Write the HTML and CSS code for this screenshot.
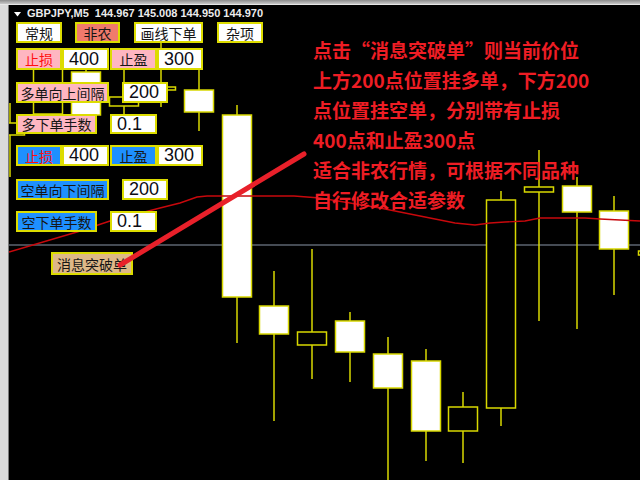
FILE: index.html
```html
<!DOCTYPE html>
<html lang="zh-CN">
<head>
    <meta charset="UTF-8">
    <title>GBPJPY,M5</title>
    <link rel="stylesheet" href="styles.css">
</head>
<body>
    <div class="window">
        <div class="topbar"></div>
        <div class="main">
            <div class="side"></div>
            <div class="chart">
                <svg class="plot" width="631" height="475" viewBox="9 5 631 475">
                    <line class="grid" x1="9" y1="245" x2="640" y2="245"/>

                    <line class="wick" x1="10" y1="103" x2="10" y2="177"/>
                    <rect class="down" x="-4.5" y="123" width="29" height="12"/>
                    <line class="wick" x1="48" y1="50" x2="48" y2="116"/>
                    <rect class="down" x="33.5" y="58" width="29" height="56"/>
                    <line class="wick" x1="86" y1="60" x2="86" y2="125"/>
                    <rect class="up" x="71.5" y="72" width="29" height="43"/>
                    <line class="wick" x1="124" y1="70" x2="124" y2="114"/>
                    <rect class="down" x="109.5" y="97" width="29" height="9"/>
                    <line class="wick" x1="161" y1="35" x2="161" y2="107"/>
                    <rect class="down" x="146.5" y="87" width="29" height="3"/>
                    <line class="wick" x1="199" y1="70" x2="199" y2="131"/>
                    <rect class="up" x="184.5" y="90" width="29" height="22"/>
                    <line class="wick" x1="237" y1="105" x2="237" y2="343"/>
                    <rect class="up" x="222.5" y="115" width="29" height="182"/>
                    <line class="wick" x1="274" y1="271" x2="274" y2="421"/>
                    <rect class="up" x="259.5" y="306" width="29" height="28"/>
                    <line class="wick" x1="312" y1="249" x2="312" y2="379"/>
                    <rect class="down" x="297.5" y="332" width="29" height="13"/>
                    <line class="wick" x1="350" y1="312" x2="350" y2="382"/>
                    <rect class="up" x="335.5" y="321" width="29" height="31"/>
                    <line class="wick" x1="388" y1="337" x2="388" y2="480"/>
                    <rect class="up" x="373.5" y="354" width="29" height="34"/>
                    <line class="wick" x1="426" y1="349" x2="426" y2="461"/>
                    <rect class="up" x="411.5" y="361" width="29" height="70"/>
                    <line class="wick" x1="463" y1="392" x2="463" y2="463"/>
                    <rect class="down" x="448.5" y="407" width="29" height="24"/>
                    <line class="wick" x1="501" y1="191" x2="501" y2="426"/>
                    <rect class="down" x="486.5" y="200" width="29" height="208"/>
                    <line class="wick" x1="539" y1="150" x2="539" y2="321"/>
                    <rect class="down" x="524.5" y="187" width="29" height="5"/>
                    <line class="wick" x1="577" y1="177" x2="577" y2="329"/>
                    <rect class="up" x="562.5" y="186" width="29" height="26"/>
                    <line class="wick" x1="614" y1="196" x2="614" y2="295"/>
                    <rect class="up" x="599.5" y="211" width="29" height="38"/>
                    <rect class="down" x="638.5" y="251" width="29" height="4"/>

                    <polyline class="ma" points="9,252 77,232 110,221 160,208 180,203 197,197 207,196 294,196 320,198 350,203 380,208 420,216 455,223 475,225 490,223 505,222 525,221 540,218 585,218 600,219 620,220 640,221"/>
                </svg>

                <div class="title">
                    <svg class="caret" width="7" height="5" viewBox="0 0 7 5"><path d="M0 0H7L3.5 4.5Z"/></svg>
                    <span>GBPJPY,M5&nbsp; 144.967 145.008 144.950 144.970</span>
                </div>

                <div class="panel">
                    <div class="row tabs">
                        <div class="box white w46">常规</div>
                        <div class="box salmon w45">非农</div>
                        <div class="box white w69">画线下单</div>
                        <div class="box white w46">杂项</div>
                    </div>
                    <div class="row pair r2">
                        <div class="box pink w46 alert">止损</div>
                        <div class="box field w47">400</div>
                        <div class="box pink w47 gap1">止盈</div>
                        <div class="box field w46">300</div>
                    </div>
                    <div class="row spaced r3">
                        <div class="box pink w93">多单向上间隔</div>
                        <div class="box field w46">200</div>
                    </div>
                    <div class="row spaced r4">
                        <div class="box pink w81">多下单手数</div>
                        <div class="box field w47">0.1</div>
                    </div>
                    <div class="row pair r5">
                        <div class="box blue w46 alert">止损</div>
                        <div class="box field w47">400</div>
                        <div class="box blue w47 gap1">止盈</div>
                        <div class="box field w46">300</div>
                    </div>
                    <div class="row spaced r6">
                        <div class="box blue w93">空单向下间隔</div>
                        <div class="box field w46">200</div>
                    </div>
                    <div class="row spaced r7">
                        <div class="box blue w81">空下单手数</div>
                        <div class="box field w47">0.1</div>
                    </div>
                    <div class="row r8">
                        <div class="box tan w82">消息突破单</div>
                    </div>
                </div>

                <div class="note">
                    <p>点击“消息突破单”则当前价位</p>
                    <p>上方200点位置挂多单，下方200</p>
                    <p>点位置挂空单，分别带有止损</p>
                    <p>400点和止盈300点</p>
                    <p>适合非农行情，可根据不同品种</p>
                    <p>自行修改合适参数</p>
                </div>

                <svg class="arrow" width="631" height="475" viewBox="9 5 631 475">
                    <line x1="120" y1="265" x2="304" y2="154"/>
                </svg>
            </div>
        </div>
    </div>
</body>
</html>
```

FILE: styles.css
```css
body {
    margin: 0;
    background-color: #d4d0c8;
    font-family: "Liberation Sans", "Noto Sans CJK SC", sans-serif;
}
.window {
    width: 640px;
    height: 480px;
    display: flex;
    flex-direction: column;
    overflow: hidden;
}
.topbar {
    height: 4px;
    background: linear-gradient(#8c8c8c, #c8c8c8);
    border-bottom: 1px solid #e6e6e6;
}
.main {
    flex: 1;
    display: flex;
}
.side {
    width: 8px;
    background-color: #dadada;
    border-right: 1px solid #7a7a7a;
}
.chart {
    flex: 1;
    position: relative;
    background-color: #000;
    overflow: hidden;
}

/* chart drawing */
.plot, .arrow {
    position: absolute;
    left: 0;
    top: 0;
}
.grid {
    stroke: #5c6570;
    stroke-width: 1.6;
}
.wick {
    stroke: #d8d800;
    stroke-width: 1.5;
}
.up, .down {
    stroke: #d8d800;
    stroke-width: 1.5;
}
.up {
    fill: #fff;
}
.down {
    fill: #000;
}
.ma {
    fill: none;
    stroke: #c8080c;
    stroke-width: 1.4;
}
.arrow line {
    stroke: #e8202a;
    stroke-width: 5;
    stroke-linecap: round;
}

/* symbol title */
.title {
    position: relative;
    padding: 2px 0 0 5px;
    height: 13px;
    display: flex;
    align-items: center;
    gap: 6px;
    color: #ececec;
    font-size: 11px;
    font-weight: bold;
    line-height: 13px;
    white-space: nowrap;
}
.caret {
    fill: #fff;
    margin-top: 1px;
}

/* trade panel */
.panel {
    position: absolute;
    left: 7px;
    top: 17px;
    display: flex;
    flex-direction: column;
}
.row {
    display: flex;
    height: 21px;
}
.tabs {
    gap: 13px;
}
.tabs .box:nth-child(n+3) {
    margin-left: 1px;
}
.spaced {
    gap: 13px;
}
.r2 { margin-top: 5px; height: 22px; }
.r3 { margin-top: 12px; }
.r4 { margin-top: 11px; height: 20px; }
.r5 { margin-top: 11px; }
.r6 { margin-top: 13px; }
.r7 { margin-top: 11px; }
.r8 { margin-top: 20px; height: 23px; padding-left: 35px; }

.box {
    box-sizing: border-box;
    height: 100%;
    border: 2px solid #dcdc00;
    display: flex;
    align-items: center;
    justify-content: center;
    font-family: "Noto Sans CJK SC", sans-serif;
    font-size: 14px;
    color: #161616;
    white-space: nowrap;
}
.field {
    justify-content: flex-start;
    padding-left: 5px;
    background-color: #fff;
    font-family: "Liberation Sans", sans-serif;
    font-size: 18px;
    color: #0c0c14;
}
.gap1 { margin-left: 1px; }
.w45 { width: 45px; }
.w46 { width: 46px; }
.w47 { width: 47px; }
.w69 { width: 69px; }
.w81 { width: 81px; }
.w82 { width: 82px; }
.w93 { width: 93px; }

.white { background-color: #fff; }
.salmon { background-color: #f07a6c; }
.pink { background-color: #ffb6c1; }
.blue { background-color: #1e90ff; }
.tan { background-color: #deb887; }
.alert { color: #ff1010; }

/* red annotation */
.note {
    position: absolute;
    left: 304px;
    top: 30px;
    color: #ee1d24;
    font-family: "Noto Sans CJK SC", sans-serif;
    font-size: 19px;
    font-weight: bold;
    line-height: 30px;
    white-space: nowrap;
}
.note p {
    margin: 0;
}
```
